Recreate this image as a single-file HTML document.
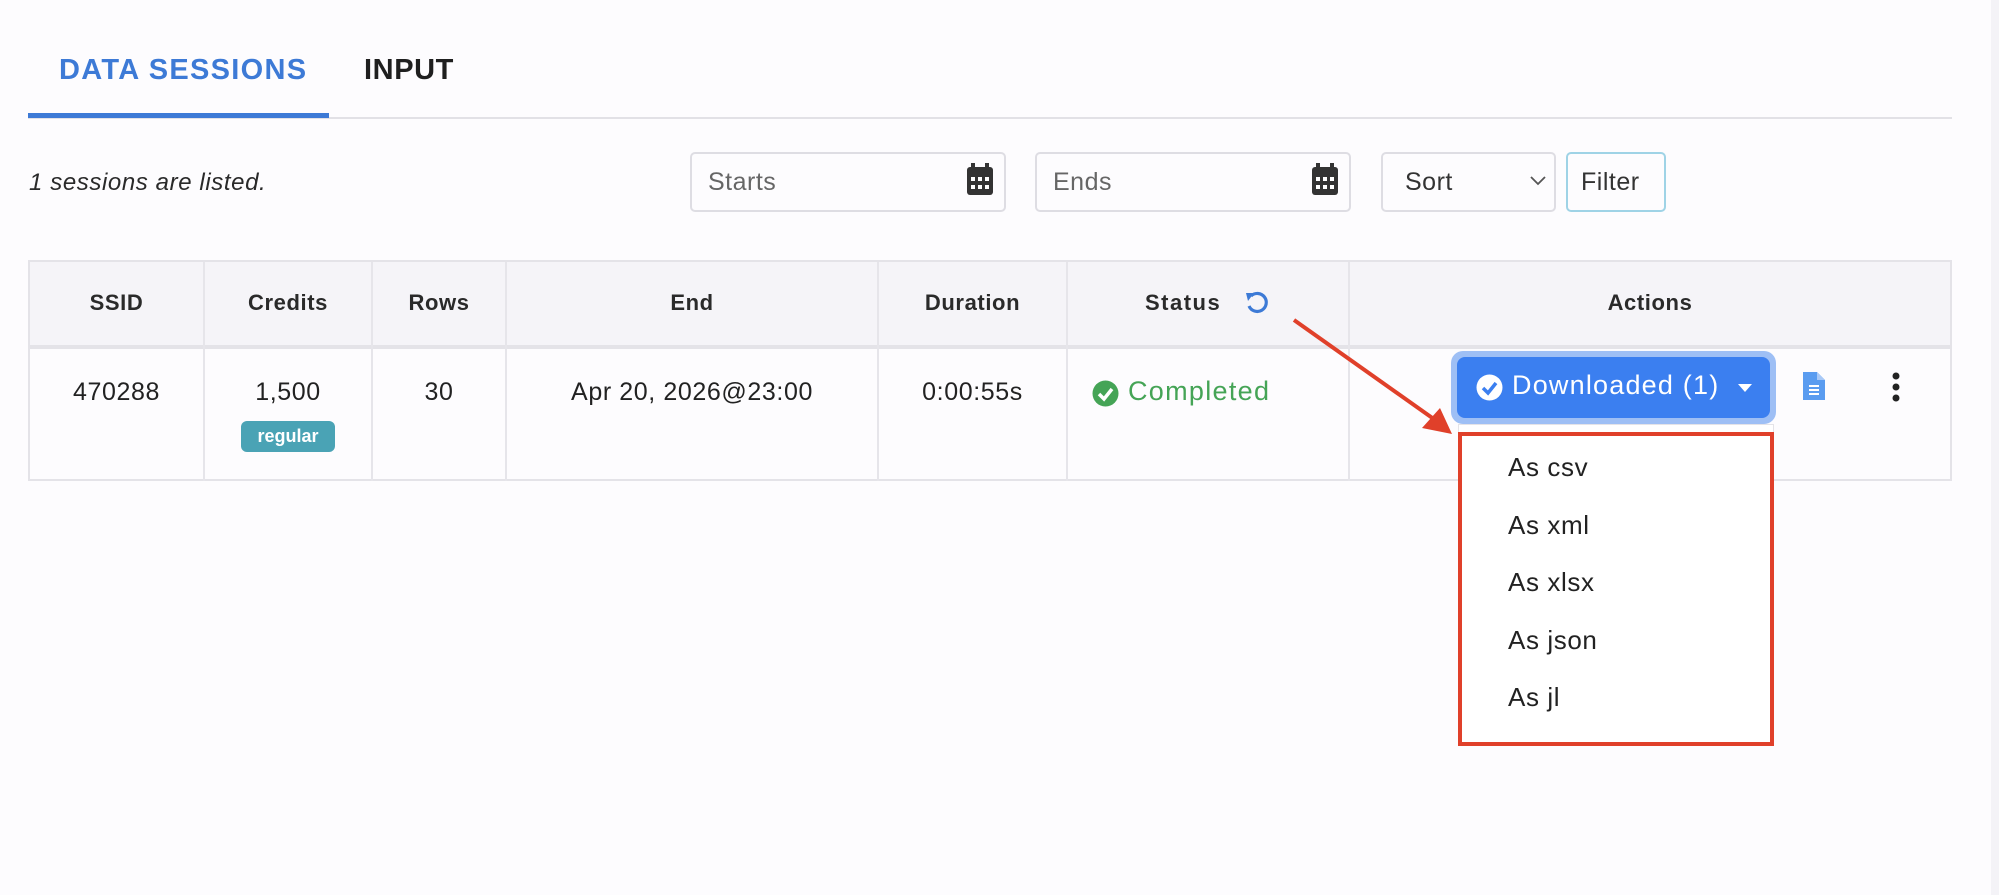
<!DOCTYPE html>
<html><head><meta charset="utf-8"><style>
*{box-sizing:border-box;margin:0;padding:0}
body{width:1999px;height:895px;background:#fdfcfe;font-family:"Liberation Sans",sans-serif;color:#222;position:relative;overflow:hidden}
.a{position:absolute}
.tab{font-size:29px;font-weight:bold;top:54px;letter-spacing:0.6px}
.in{position:absolute;top:152px;height:60px;border:2px solid #dedde3;border-radius:5px;background:#fdfcfe;font-size:25px;color:#666;padding:14px 0 0 16px;letter-spacing:0.5px}
.h{position:absolute;top:290px;font-weight:bold;font-size:22px;color:#2a2a2a;text-align:center;letter-spacing:0.6px}
.c{position:absolute;top:378px;font-size:25px;color:#222;text-align:center;letter-spacing:0.6px}
.v{position:absolute;top:262px;width:2px;height:219px;background:#e6e5ea}
.mi{position:absolute;left:1508px;font-size:26px;color:#222;letter-spacing:0.6px}
</style></head><body>
<div class="a tab" style="left:59px;color:#3d7ad6;letter-spacing:1.3px">DATA SESSIONS</div>
<div class="a tab" style="left:364px;color:#1f1f1f">INPUT</div>
<div class="a" style="left:28px;top:117px;width:1924px;height:2px;background:#e2e1e6"></div>
<div class="a" style="left:28px;top:113px;width:301px;height:5px;background:#3d7ad6"></div>
<div class="a" style="left:29px;top:169px;font-size:24px;font-style:italic;color:#2a2a2a;letter-spacing:0.6px">1 sessions are listed.</div>

<div class="in" style="left:690px;width:316px">Starts</div>
<div class="in" style="left:1035px;width:316px">Ends</div>
<svg class="a" style="left:966px;top:163px" width="28" height="34" viewBox="0 0 28 34"><rect x="5" y="0" width="4" height="7" fill="#333"/><rect x="19" y="0" width="4" height="7" fill="#333"/><rect x="1" y="4" width="26" height="28" rx="3" fill="#333"/><g fill="#fff"><rect x="5" y="14" width="4" height="4"/><rect x="12" y="14" width="4" height="4"/><rect x="19" y="14" width="4" height="4"/><rect x="5" y="22" width="4" height="4"/><rect x="12" y="22" width="4" height="4"/><rect x="19" y="22" width="4" height="4"/></g></svg>
<svg class="a" style="left:1311px;top:163px" width="28" height="34" viewBox="0 0 28 34"><rect x="5" y="0" width="4" height="7" fill="#333"/><rect x="19" y="0" width="4" height="7" fill="#333"/><rect x="1" y="4" width="26" height="28" rx="3" fill="#333"/><g fill="#fff"><rect x="5" y="14" width="4" height="4"/><rect x="12" y="14" width="4" height="4"/><rect x="19" y="14" width="4" height="4"/><rect x="5" y="22" width="4" height="4"/><rect x="12" y="22" width="4" height="4"/><rect x="19" y="22" width="4" height="4"/></g></svg>
<div class="in" style="left:1381px;width:175px;color:#333;padding-left:22px">Sort</div>
<svg class="a" style="left:1530px;top:175px" width="16" height="12"><path d="M1 2 L8 9 L15 2" fill="none" stroke="#555" stroke-width="1.8"/></svg>
<div class="in" style="left:1566px;width:100px;border-color:#9fd3e6;color:#333;padding-left:13px">Filter</div>

<div class="a" style="left:28px;top:260px;width:1924px;height:221px;border:2px solid #e4e3e8;background:#fdfcfe"></div>
<div class="a" style="left:30px;top:262px;width:1920px;height:84px;background:#f5f4f8"></div>
<div class="a" style="left:30px;top:345px;width:1920px;height:4px;background:#e4e3e8"></div>
<div class="v" style="left:203px"></div><div class="v" style="left:371px"></div><div class="v" style="left:505px"></div><div class="v" style="left:877px"></div><div class="v" style="left:1066px"></div><div class="v" style="left:1348px"></div>

<div class="h" style="left:30px;width:173px">SSID</div>
<div class="h" style="left:205px;width:166px">Credits</div>
<div class="h" style="left:373px;width:132px">Rows</div>
<div class="h" style="left:507px;width:370px">End</div>
<div class="h" style="left:879px;width:187px">Duration</div>
<div class="h" style="left:1145px;letter-spacing:1.5px">Status</div>
<svg class="a" style="left:1244px;top:290px" width="26" height="26" viewBox="0 0 26 26"><path d="M7 6 A9 9 0 1 1 5 16" fill="none" stroke="#3d7ad6" stroke-width="3.2"/><path d="M2 3 L10 3 L4 11 Z" fill="#3d7ad6"/></svg>
<div class="h" style="left:1350px;width:600px">Actions</div>

<div class="c" style="left:30px;width:173px">470288</div>
<div class="c" style="left:205px;width:166px">1,500</div>
<div class="a" style="left:241px;top:421px;width:94px;height:31px;background:#4aa3b5;border-radius:6px;color:#fff;font-weight:bold;font-size:18px;text-align:center;line-height:30px">regular</div>
<div class="c" style="left:373px;width:132px">30</div>
<div class="c" style="left:507px;width:370px">Apr 20, 2026@23:00</div>
<div class="c" style="left:879px;width:187px">0:00:55s</div>
<svg class="a" style="left:1092px;top:380px" width="27" height="27"><circle cx="13.5" cy="13.5" r="13" fill="#45a456"/><path d="M7 14 L12 19 L20 9" fill="none" stroke="#fff" stroke-width="3.5"/></svg>
<div class="c" style="left:1128px;color:#45a456;font-size:27px;top:376px;letter-spacing:1.3px">Completed</div>

<div class="a" style="left:1451px;top:351px;width:325px;height:73px;background:#9ebff5;border-radius:12px"></div>
<div class="a" style="left:1457px;top:357px;width:313px;height:61px;background:#3b7ff0;border-radius:8px"></div>
<svg class="a" style="left:1476px;top:374px" width="27" height="27"><circle cx="13.5" cy="13.5" r="13" fill="#fff"/><path d="M7 14 L12 19 L20 9" fill="none" stroke="#3b7ff0" stroke-width="3.5"/></svg>
<div class="a" style="left:1512px;top:370px;color:#fff;font-size:27px;letter-spacing:1.2px">Downloaded (1)</div>
<svg class="a" style="left:1737px;top:383px" width="16" height="10"><path d="M1 1 L15 1 L8 9 Z" fill="#fff"/></svg>
<svg class="a" style="left:1803px;top:372px" width="22" height="28" viewBox="0 0 22 28"><path d="M0 0 H14 L22 8 V28 H0 Z" fill="#5a9cf0"/><path d="M14 0 V8 H22" fill="#a9c9f7"/><g stroke="#fff" stroke-width="2"><line x1="6" y1="14" x2="16" y2="14"/><line x1="6" y1="18" x2="16" y2="18"/><line x1="6" y1="22" x2="16" y2="22"/></g></svg>
<svg class="a" style="left:1890px;top:372px" width="12" height="30"><circle cx="6" cy="4" r="3.5" fill="#222"/><circle cx="6" cy="15" r="3.5" fill="#222"/><circle cx="6" cy="26" r="3.5" fill="#222"/></svg>

<div class="a" style="left:1458px;top:424px;width:316px;height:10px;background:#fff;border:1px solid #e4e3e8"></div>
<div class="a" style="left:1458px;top:432px;width:316px;height:314px;background:#fff;border:4px solid #e0402a"></div>
<div class="mi" style="top:452px">As csv</div>
<div class="mi" style="top:510px">As xml</div>
<div class="mi" style="top:567px">As xlsx</div>
<div class="mi" style="top:625px">As json</div>
<div class="mi" style="top:682px">As jl</div>

<svg class="a" style="left:0;top:0" width="1999" height="895"><line x1="1294" y1="320" x2="1438" y2="422" stroke="#e0402a" stroke-width="4"/><path d="M1452 434 L1422 428 L1440 408 Z" fill="#e0402a"/></svg>
<div class="a" style="left:1991px;top:0;width:8px;height:895px;background:#f4f3f7"></div>
</body></html>
